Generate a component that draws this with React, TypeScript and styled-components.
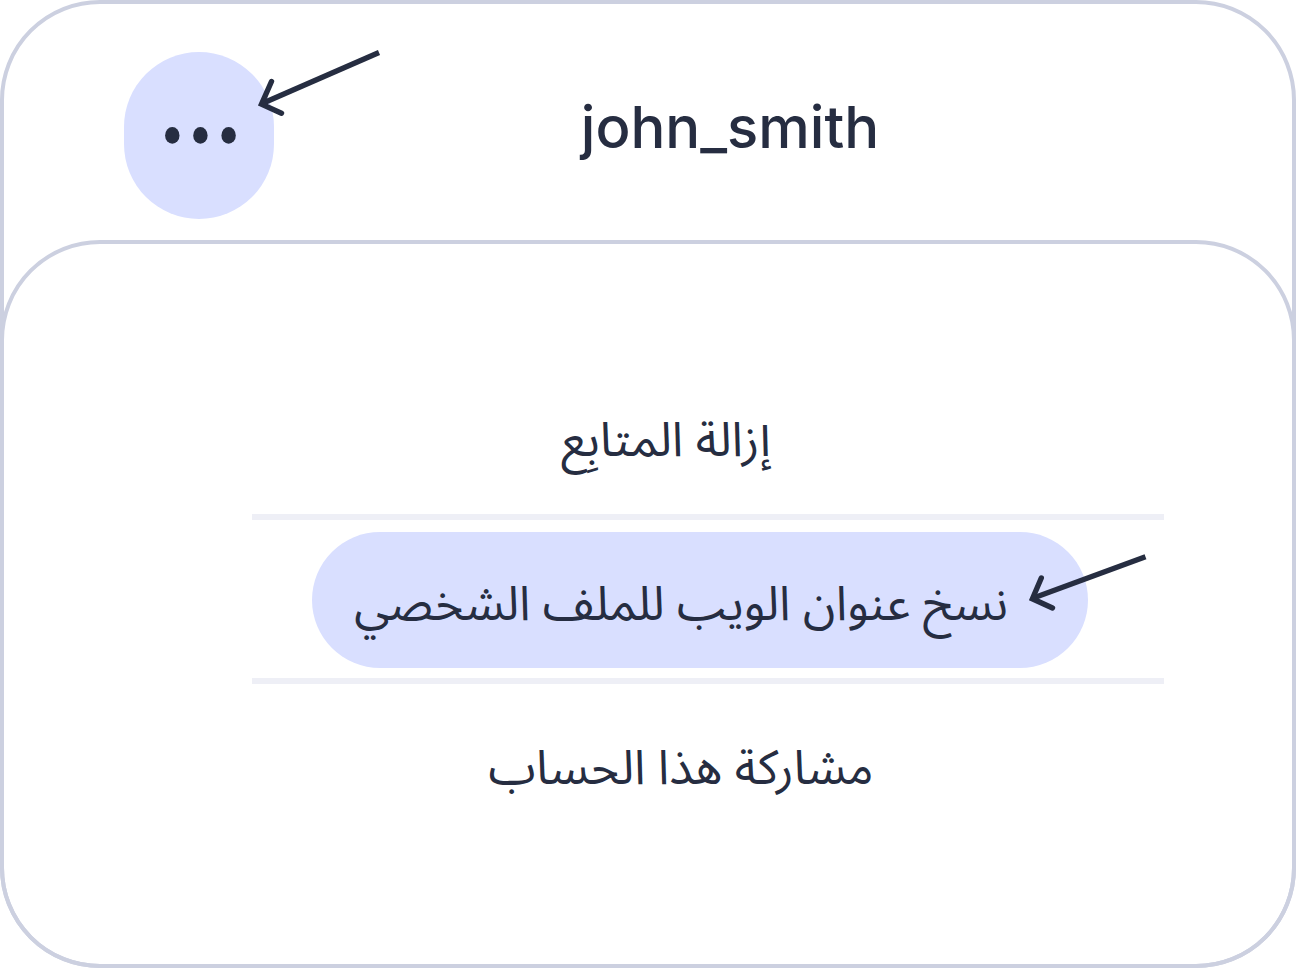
import React from "react";
import styled, { createGlobalStyle } from "styled-components";

const ink = "#262d41";
const line = "#ccd0e0";
const highlight = "#d9dfff";

const GlobalStyle = createGlobalStyle`
  *, *::before, *::after { box-sizing: border-box; }
  body { margin: 0; background: #ffffff; color: ${ink}; }
`;

const Card = styled.main`
  border: 4px solid ${line};
  border-radius: 100px;
  background: #ffffff;
`;

const Header = styled.header`
  display: flex;
  height: 236px;
  padding: 48px 120px 0;
`;

const ButtonWrap = styled.div`
  position: relative;
  flex: none;
  width: 150px;
  height: 167px;
`;

const MoreButton = styled.button`
  display: flex;
  align-items: center;
  justify-content: center;
  width: 100%;
  height: 100%;
  padding: 0;
  border: 0;
  border-radius: 75px;
  background: ${highlight};
  color: ${ink};
  cursor: pointer;
`;

const Title = styled.h1`
  flex: 1;
  margin: 0;
  padding: 39px 0 0 14px;
  font: 500 58px/72px Inter, "Liberation Sans", sans-serif;
  text-align: center;
`;

const Panel = styled.section`
  margin: 0 -4px -4px;
  padding: 112px 128px 122px 248px;
  border: 4px solid ${line};
  border-radius: 100px;
`;

const Menu = styled.ul`
  margin: 0;
  padding: 0;
  list-style: none;
`;

const Item = styled.li`
  height: 164px;
  padding: 12px 76px 10px 60px;
  border-bottom: 6px solid #eeeff6;

  &:last-child {
    height: 158px;
    border-bottom: 0;
  }
`;

const ItemWrap = styled.div`
  position: relative;
  height: 100%;
`;

const ItemButton = styled.button<{ $active?: boolean; $indent: number }>`
  width: 100%;
  height: 100%;
  padding: 10px ${({ $indent }) => $indent}px 0 0;
  border: 0;
  border-radius: 68px;
  background: ${({ $active }) => ($active ? highlight : "transparent")};
  color: ${ink};
  font: 400 48px/64px "Noto Sans Arabic", "Noto Sans", sans-serif;
  white-space: nowrap;
  cursor: pointer;
`;

const Pointer = styled.svg<{ $top: number; $left?: number; $right?: number }>`
  position: absolute;
  top: ${({ $top }) => $top}px;
  left: ${({ $left }) => ($left === undefined ? "auto" : `${$left}px`)};
  right: ${({ $right }) => ($right === undefined ? "auto" : `${$right}px`)};
  fill: none;
  stroke: ${ink};
  stroke-width: 5.4;
  pointer-events: none;
`;

const items = [
  { label: "إزالة المتابِع", indent: 68 },
  { label: "نسخ عنوان الويب للملف الشخصي", indent: 38, active: true },
  { label: "مشاركة هذا الحساب", indent: 38 },
];

export default function App() {
  return (
    <>
      <GlobalStyle />
      <Card>
        <Header>
          <ButtonWrap>
            <MoreButton type="button" aria-label="المزيد">
              <svg width="74" height="17" viewBox="0 0 74 17" fill="currentColor" aria-hidden="true">
                <ellipse cx="10.3" cy="8.4" rx="7.2" ry="8.4" />
                <ellipse cx="38.4" cy="8.4" rx="7.2" ry="8.4" />
                <ellipse cx="66.6" cy="8.4" rx="7.2" ry="8.4" />
              </svg>
            </MoreButton>
            <Pointer $top={-12} $left={126} width="140" height="85" viewBox="0 0 140 85" aria-hidden="true">
              <path d="M129 12.5 L11 64" />
              <path d="M21.5 41.5 L11.5 64.2 L31.5 73.2" strokeLinecap="round" strokeLinejoin="miter" />
            </Pointer>
          </ButtonWrap>
          <Title>john_smith</Title>
        </Header>
        <Panel>
          <Menu dir="rtl">
            {items.map(({ label, indent, active }) => (
              <Item key={label}>
                <ItemWrap>
                  <ItemButton type="button" $active={active} $indent={indent}>
                    {label}
                  </ItemButton>
                  {active && (
                    <Pointer $top={18} $right={-62} width="130" height="65" viewBox="0 0 130 65" aria-hidden="true">
                      <path d="M125.5 6.7 L12 48.5" />
                      <path d="M21.3 28 L12.4 48.8 L32.5 58" strokeLinecap="round" strokeLinejoin="miter" />
                    </Pointer>
                  )}
                </ItemWrap>
              </Item>
            ))}
          </Menu>
        </Panel>
      </Card>
    </>
  );
}
